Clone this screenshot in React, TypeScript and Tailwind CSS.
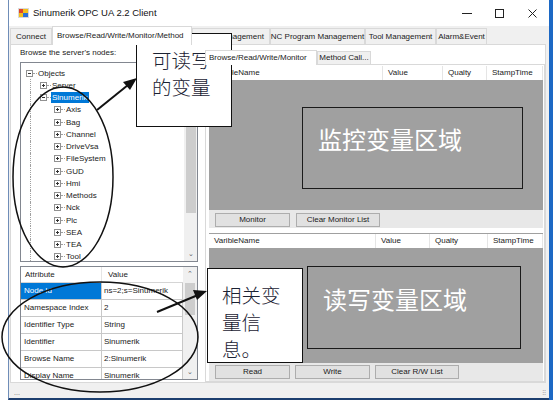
import React from "react";

const topTabs = [
  { label: "Connect", w: "w-[42px]" },
  { label: "Browse/Read/Write/Monitor/Method", w: "w-[140px]", active: true },
  { label: "User Management", w: "w-[78px]" },
  { label: "NC Program Management", w: "w-[95px]" },
  { label: "Tool Management", w: "w-[71px]" },
  { label: "Alarm&Event", w: "w-[51px]" },
];

const children = ["Axis", "Bag", "Channel", "DriveVsa", "FileSystem", "GUD", "Hmi", "Methods", "Nck", "Plc", "SEA", "TEA", "Tool"];

const treeRows = [
  { level: 0, label: "Objects", open: true },
  { level: 1, label: "Server", open: false },
  { level: 1, label: "Sinumerik", open: true, selected: true },
  ...children.map((c) => ({ level: 2, label: c, open: false })),
];

const attributes = [
  ["Node Id", "ns=2;s=Sinumerik"],
  ["Namespace Index", "2"],
  ["Identifier Type", "String"],
  ["Identifier", "Sinumerik"],
  ["Browse Name", "2:Sinumerik"],
  ["Display Name", "Sinumerik"],
];

function ExpandBox({ open }: { open: boolean }) {
  return (
    <svg width="7" height="7" viewBox="0 0 7 7" className="shrink-0">
      <rect x="0.5" y="0.5" width="6" height="6" fill="white" stroke="#919191" />
      <line x1="2" y1="3.5" x2="5" y2="3.5" stroke="#333" />
      {!open && <line x1="3.5" y1="2" x2="3.5" y2="5" stroke="#333" />}
    </svg>
  );
}

function Guide() {
  return (
    <div className="w-[14px] h-full flex justify-center shrink-0">
      <div className="h-full border-l border-dotted border-[#a0a0a0]" />
    </div>
  );
}

function TreeView() {
  return (
    <div className="h-[200px] border border-[#828790] bg-white flex mt-[3px]">
      <div className="flex-1 pl-[2px] pt-[4px] overflow-hidden">
        {treeRows.map((r, i) => (
          <div key={i} className="flex items-center h-[12.25px]">
            {r.level > 0 && <Guide />}
            {r.level > 1 && <div className="w-[14px] shrink-0" />}
            <div className="w-[14px] flex items-center shrink-0">
              <div className="ml-[3px]">
                <ExpandBox open={r.open} />
              </div>
              <div className="w-[4px] border-t border-dotted border-[#a0a0a0]" />
            </div>
            <span
              className={
                r.selected
                  ? "ml-[0px] px-[1px] bg-[#0078d7] text-white leading-[11px]"
                  : "ml-[1px] leading-[11px]"
              }
            >
              {r.label}
            </span>
          </div>
        ))}
      </div>
      {/* barra de rolagem */}
      <div className="w-[13px] bg-[#f0f0f0] flex flex-col items-center">
        <div className="w-[10px] h-[150px] bg-[#cdcdcd]" />
        <div className="flex-1" />
        <div className="text-[7px] text-[#606060] leading-[10px] mb-[2px]">⌄</div>
      </div>
    </div>
  );
}

function AttributeGrid() {
  return (
    <div className="h-[114px] border border-[#828790] bg-white flex mt-[4px] overflow-hidden">
      <div className="w-[162px] flex flex-col">
        <div className="flex h-[16px] items-center border-b border-[#d5d5d5] shrink-0">
          <div className="w-[81px] pl-[4px] border-r border-[#e5e5e5] h-full flex items-center">Attribute</div>
          <div className="w-[81px] pl-[6px]">Value</div>
        </div>
        {attributes.map(([a, v], i) => (
          <div key={a} className="flex h-[17px] border-b border-[#c8c8c8] shrink-0">
            <div
              className={
                "w-[81px] pl-[3px] border-r border-[#c8c8c8] flex items-center " +
                (i === 0 ? "bg-[#0078d7] text-white" : "")
              }
            >
              {a}
            </div>
            <div className="w-[81px] pl-[2px] border-r border-[#c8c8c8] flex items-center">{v}</div>
          </div>
        ))}
      </div>
      <div className="w-[14px] bg-[#f0f0f0] flex flex-col items-center">
        <div className="text-[7px] text-[#606060] leading-[14px] h-[14px]">⌃</div>
        <div className="w-[10px] h-[32px] bg-[#cdcdcd] mt-[2px]" />
        <div className="flex-1" />
        <div className="text-[7px] text-[#606060] leading-[10px] mb-[2px]">⌄</div>
      </div>
    </div>
  );
}

function ListHeader({ cols }: { cols: { label: string; w: string }[] }) {
  return (
    <div className="flex h-[14px] bg-white shrink-0">
      {cols.map((c) => (
        <div key={c.label} className={c.w + " pl-[5px] border-r border-[#e5e5e5] flex items-center"}>
          {c.label}
        </div>
      ))}
    </div>
  );
}

function Btn({ label, w }: { label: string; w: string }) {
  return (
    <div className={w + " h-[14px] bg-[#e1e1e1] border border-[#adadad] flex items-center justify-center"}>
      {label}
    </div>
  );
}

export default function App() {
  const cjk = "font-['Noto_Sans_CJK_SC',sans-serif]";
  return (
    <div className="w-[553px] h-[400px] flex bg-white overflow-hidden relative font-['Liberation_Sans',Arial,sans-serif] text-[8px] text-[#1a1a1a]">
      <div className="w-[8px] bg-white shrink-0" />

      {/* janela */}
      <div className="w-[541px] h-[400px] flex flex-col border-l border-b-2 border-l-[#6f8db8] border-b-[#1d3f6f] shrink-0">
        {/* barra de título */}
        <div className="h-[26px] bg-white flex items-center pl-[9px] shrink-0">
          <svg width="11" height="10" viewBox="0 0 11 10">
            <rect x="0" y="0" width="11" height="10" fill="#d9d9d9" />
            <rect x="1" y="1" width="4" height="4" fill="#e0442a" />
            <rect x="5" y="1" width="5" height="4" fill="#f3c01c" />
            <rect x="1" y="5" width="4" height="4" fill="#f3c01c" />
            <rect x="5" y="5" width="5" height="4" fill="#2b6fd6" />
          </svg>
          <span className="ml-[4px] text-[9.5px] text-[#111]">Sinumerik OPC UA 2.2 Client</span>
          <div className="flex-1" />
          <div className="w-[33px] h-[26px] flex items-center justify-center">
            <svg width="10" height="10" viewBox="0 0 10 10"><line x1="0" y1="5.5" x2="10" y2="5.5" stroke="#222" /></svg>
          </div>
          <div className="w-[33px] h-[26px] flex items-center justify-center">
            <svg width="9" height="9" viewBox="0 0 9 9"><rect x="0.5" y="0.5" width="8" height="8" fill="none" stroke="#222" /></svg>
          </div>
          <div className="w-[33px] h-[26px] flex items-center justify-center">
            <svg width="9" height="9" viewBox="0 0 9 9"><path d="M0.5 0.5L8.5 8.5M8.5 0.5L0.5 8.5" stroke="#222" /></svg>
          </div>
        </div>

        <div className="flex-1 bg-[#f0f0f0] flex flex-col pl-[1px]">
          {/* abas principais */}
          <div className="h-[18px] flex items-end shrink-0">
            {topTabs.map((t) =>
              t.active ? (
                <div key={t.label} className={t.w + " h-[19px] bg-white border border-b-0 border-[#d9d9d9] -mb-[1px] z-10 flex items-center pl-[4px] whitespace-nowrap overflow-hidden"}>
                  {t.label}
                </div>
              ) : (
                <div key={t.label} className={t.w + " h-[16px] bg-[#f0f0f0] border border-b-0 border-[#d9d9d9] flex items-center justify-center whitespace-nowrap"}>
                  {t.label}
                </div>
              )
            )}
          </div>

          <div className="w-[536px] h-[339px] bg-white border border-[#d9d9d9] flex shrink-0">
            {/* coluna esquerda */}
            <div className="w-[178px] ml-[9px] flex flex-col">
              <div className="h-[12px] leading-[12px] mt-[2px]">Browse the server's nodes:</div>
              <TreeView />
              <AttributeGrid />
            </div>

            {/* coluna direita */}
            <div className="w-[340px] ml-[7px] mt-[4px] flex flex-col">
              <div className="h-[15px] flex items-end shrink-0">
                <div className="w-[112px] h-[15px] bg-white border border-b-0 border-[#d9d9d9] -mb-[1px] z-10 flex items-center pl-[3px] whitespace-nowrap">
                  Browse/Read/Write/Monitor
                </div>
                <div className="w-[54px] h-[13px] bg-[#f0f0f0] border border-b-0 border-[#d9d9d9] flex items-center justify-center whitespace-nowrap">
                  Method Call...
                </div>
              </div>
              <div className="h-[318px] border border-[#d9d9d9] bg-white flex flex-col pl-[3px] pr-[1px] pt-[1px]">
                <ListHeader
                  cols={[
                    { label: "VaribleName", w: "w-[174px]" },
                    { label: "Value", w: "w-[60px]" },
                    { label: "Qualty", w: "w-[44px]" },
                    { label: "StampTime", w: "w-[56px]" },
                  ]}
                />
                <div className="h-[130px] bg-[#a0a0a0] relative shrink-0">
                  <div className={"absolute left-[93px] top-[27px] w-[221px] h-[82px] border-[1.5px] border-[#1a1a1a] pl-[15px] pt-[18px] text-[24px] leading-[26px] text-white " + cjk}>
                    监控变量区域
                  </div>
                </div>
                <div className="h-[18px] bg-[#e8e8e8] flex items-start pt-[3px] pl-[6px] gap-[6px] shrink-0">
                  <Btn label="Monitor" w="w-[75px]" />
                  <Btn label="Clear Monitor List" w="w-[84px]" />
                </div>
                <div className="h-[5px] shrink-0" />
                <div className="border-t border-[#a0a0a0] shrink-0" />
                <ListHeader
                  cols={[
                    { label: "VaribleName", w: "w-[167px]" },
                    { label: "Value", w: "w-[54px]" },
                    { label: "Qualty", w: "w-[58px]" },
                    { label: "StampTime", w: "w-[55px]" },
                  ]}
                />
                <div className="h-[115px] bg-[#a0a0a0] relative shrink-0">
                  <div className={"absolute left-[98px] top-[18px] w-[214px] h-[83px] border-[1.5px] border-[#1a1a1a] pl-[15px] pt-[19px] text-[24px] leading-[26px] text-white " + cjk}>
                    读写变量区域
                  </div>
                </div>
                <div className="h-[18px] bg-[#e8e8e8] flex items-start pt-[2px] pl-[6px] gap-[5px] shrink-0">
                  <Btn label="Read" w="w-[75px]" />
                  <Btn label="Write" w="w-[75px]" />
                  <Btn label="Clear R/W List" w="w-[84px]" />
                </div>
              </div>
            </div>
          </div>

          {/* barra de status */}
          <div className="flex-1 flex items-end justify-between pl-[4px] pr-[3px] pb-[1px]">
            <span className="text-[7px] text-[#666] leading-[8px]">...</span>
            <span className="text-[6px] text-[#999] leading-[8px]">⠿</span>
          </div>
        </div>
      </div>

      <div className="flex-1 bg-[#1c68c4]" />

      {/* anotações sobre a captura */}
      <svg className="absolute left-0 top-0 pointer-events-none" width="553" height="400" viewBox="0 0 553 400">
        <ellipse cx="63" cy="177" rx="50" ry="90" fill="none" stroke="#111" strokeWidth="1.5" />
        <ellipse cx="100" cy="337" rx="98" ry="55" fill="none" stroke="#111" strokeWidth="1.5" />
        <line x1="97" y1="110" x2="128" y2="85" stroke="#111" strokeWidth="2" />
        <polygon points="137,78 123,82 130,90" fill="#111" />
        <line x1="157" y1="312" x2="198" y2="295" stroke="#111" strokeWidth="2" />
        <polygon points="207,291 193,290 197,300" fill="#111" />
      </svg>

      <div className={"absolute left-[136px] top-[33px] w-[96px] h-[94px] bg-white border-[1.5px] border-[#111] pl-[15px] pt-[12px] text-[19.5px] leading-[27px] font-light text-[#1b2233] " + cjk}>
        <div>可读写</div>
        <div>的变量</div>
      </div>
      <div className={"absolute left-[207px] top-[268px] w-[96px] h-[95px] bg-white border-[1.5px] border-[#111] pl-[14px] pt-[12px] text-[19.5px] leading-[27px] font-light text-[#1b2233] " + cjk}>
        <div>相关变</div>
        <div>量信</div>
        <div>息。</div>
      </div>
    </div>
  );
}
